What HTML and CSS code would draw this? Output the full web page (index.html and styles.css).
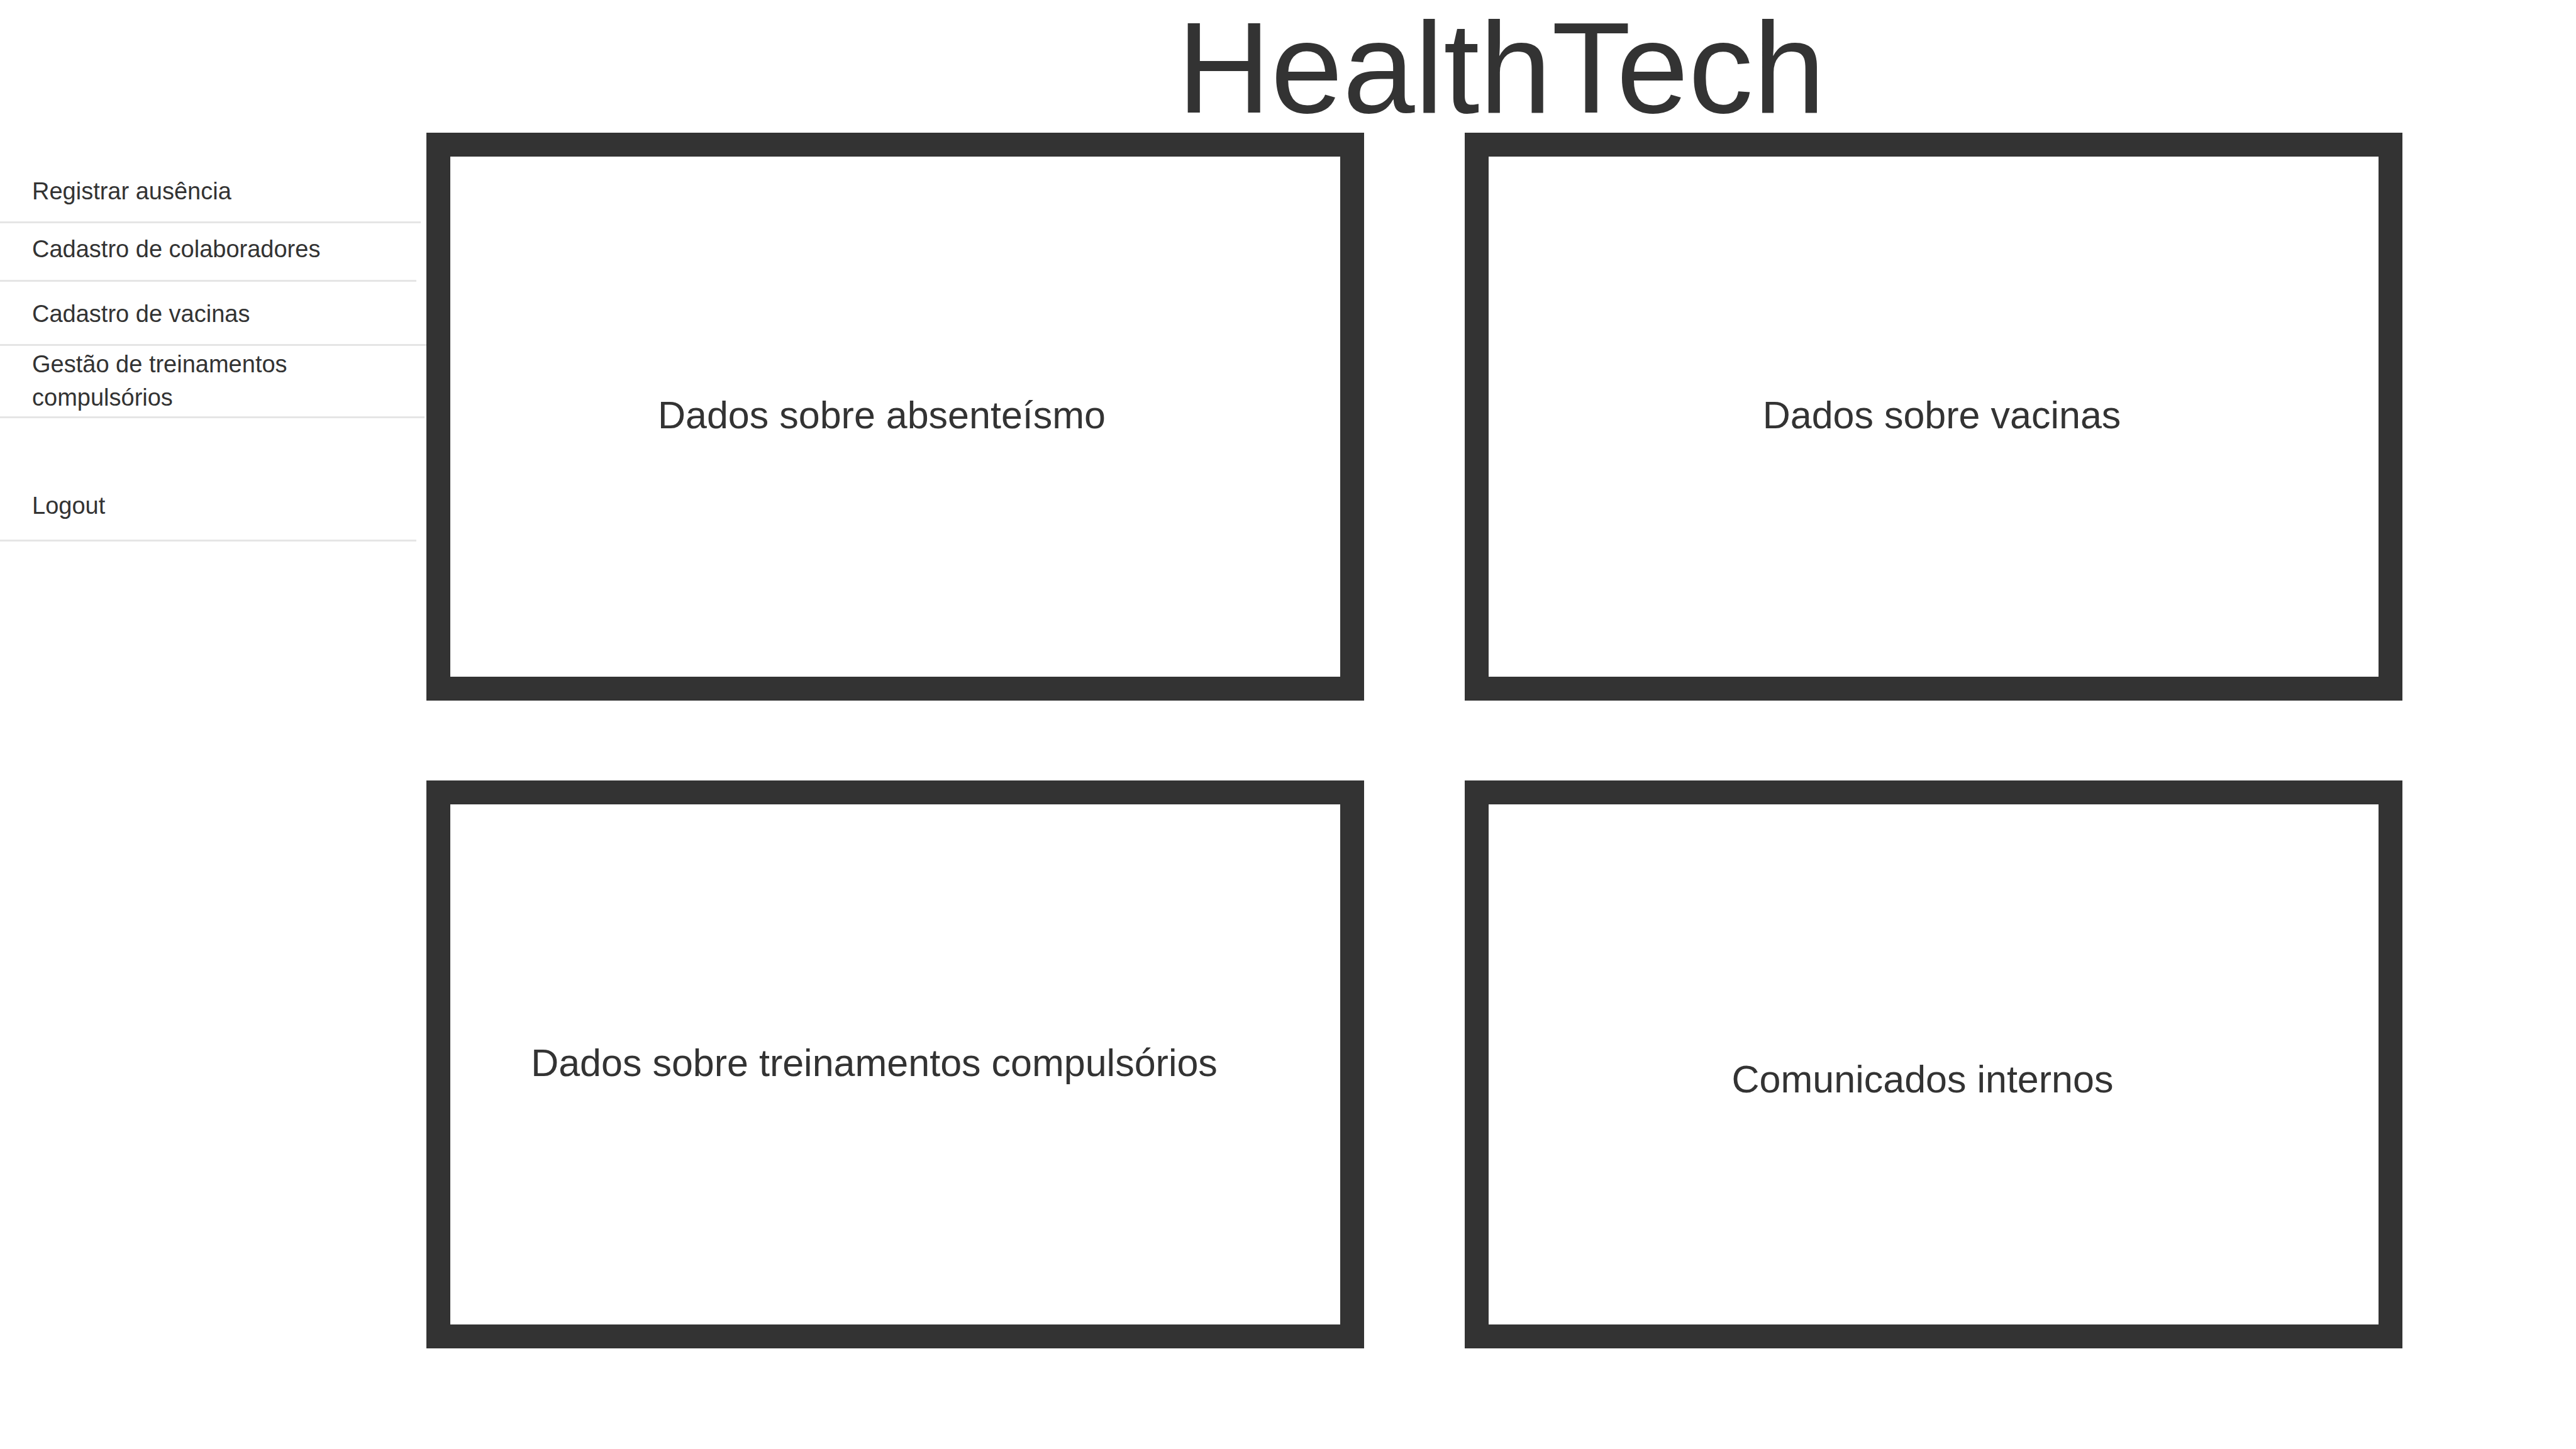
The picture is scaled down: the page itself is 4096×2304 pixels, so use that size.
FILE: index.html
```html
<!DOCTYPE html>
<html lang="pt-BR">
<head>
  <meta charset="utf-8">
  <title>HealthTech</title>
  <link rel="stylesheet" href="styles.css">
</head>
<body>
  <div class="layout">
    <nav class="menu">
      <a class="menu-item menu-absence" href="#ausencia">Registrar ausência</a>
      <a class="menu-item menu-staff" href="#colaboradores">Cadastro de colaboradores</a>
      <a class="menu-item menu-vaccines" href="#vacinas">Cadastro de vacinas</a>
      <a class="menu-item menu-training" href="#treinamentos">Gestão de treinamentos compulsórios</a>
      <a class="menu-item menu-logout" href="#logout">Logout</a>
    </nav>
    <div class="content">
      <header class="header">
        <h1 class="title">HealthTech</h1>
      </header>
      <main class="cards">
        <section class="card card-absence"><h2 class="card-title">Dados sobre absenteísmo</h2></section>
        <section class="card card-vaccines"><h2 class="card-title">Dados sobre vacinas</h2></section>
        <section class="card card-training"><h2 class="card-title">Dados sobre treinamentos compulsórios</h2></section>
        <section class="card card-news"><h2 class="card-title">Comunicados internos</h2></section>
      </main>
    </div>
  </div>
</body>
</html>
```
FILE: styles.css
```css
* {
  box-sizing: border-box;
}

body {
  margin: 0;
  background: #fff;
  color: #333;
  font-family: "Liberation Sans", Arial, sans-serif;
}

.layout {
  display: grid;
  grid-template-columns: 678px 1fr;
  align-items: start;
}

/* Side menu */
.menu {
  display: flex;
  flex-direction: column;
  padding-top: 211px;
}

.menu-item {
  padding-left: 51px;
  padding-right: 150px;
  border-bottom: 3px solid #e5e5e5;
  color: inherit;
  font-size: 38px;
  line-height: 53px;
  text-decoration: none;
}

.menu-absence {
  margin-right: 9px;
  padding-top: 67px;
  padding-bottom: 21px;
}

.menu-staff {
  margin-right: 16px;
  padding-top: 15px;
  padding-bottom: 22px;
}

.menu-vaccines {
  padding-top: 25px;
  padding-bottom: 21px;
}

.menu-training {
  margin-right: 3px;
  padding-top: 3px;
  padding-bottom: 3px;
}

.menu-logout {
  margin-right: 16px;
  padding-top: 113px;
  padding-bottom: 27px;
}

/* Page title */
.header {
  padding-top: 5px;
}

.title {
  margin: 0;
  font-size: 206px;
  font-weight: 400;
  line-height: 206px;
  text-align: center;
}

/* Dashboard cards */
.cards {
  display: grid;
  grid-template-columns: 1fr 1fr;
  grid-auto-rows: minmax(903px, auto);
  gap: 127px 160px;
  padding-right: 276px;
}

.card {
  display: flex;
  align-items: center;
  justify-content: center;
  padding-bottom: 5px;
  border: 38px solid #333;
}

.card-title {
  margin: 0;
  font-size: 61px;
  font-weight: 400;
  line-height: 80px;
}

.card-absence {
  padding-right: 43px;
}

.card-vaccines {
  padding-left: 26px;
}

.card-training {
  padding-right: 67px;
}

.card-news {
  padding-top: 51px;
  padding-right: 35px;
}
```
